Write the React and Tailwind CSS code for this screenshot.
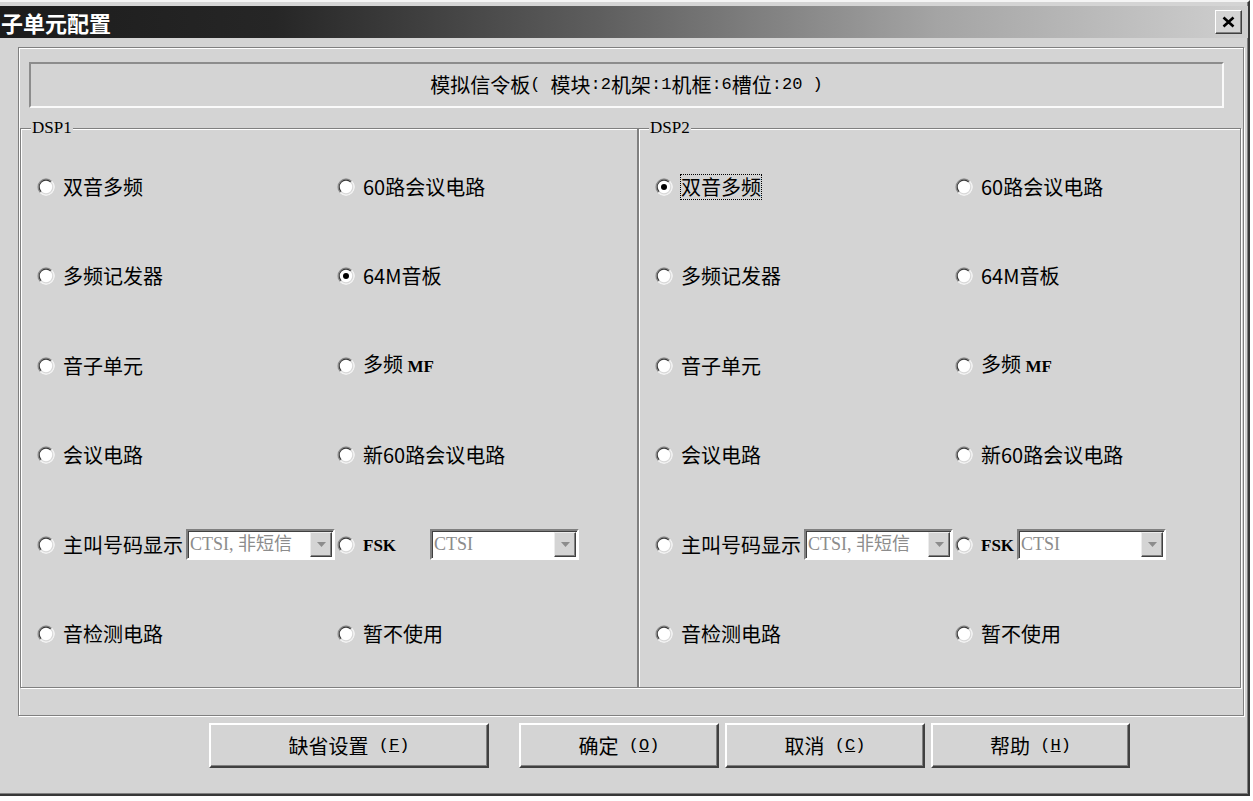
import React from 'react';

const cjk = "font-['Noto_Sans_CJK_SC',sans-serif]";
const serif = "font-['Liberation_Serif','Noto_Sans_CJK_SC',serif]";
const mono = "font-['Liberation_Mono','Noto_Sans_CJK_SC',monospace]";

function Radio({ checked }) {
  return (
    <svg width="18" height="18" viewBox="0 0 18 18" className="shrink-0">
      <circle cx="9" cy="9" r="8.5" fill="#fff" />
      <path d="M3.34 14.66A8 8 0 0 1 14.66 3.34" fill="none" stroke="#8c8c8c" strokeWidth="1.3" />
      <path d="M4.19 13.81A6.8 6.8 0 0 1 13.81 4.19" fill="none" stroke="#3c3c3c" strokeWidth="1.2" />
      <path d="M14.66 3.34A8 8 0 0 1 3.34 14.66" fill="none" stroke="#f2f2f2" strokeWidth="1.3" />
      <path d="M13.81 4.19A6.8 6.8 0 0 1 4.19 13.81" fill="none" stroke="#d8d8d8" strokeWidth="1.2" />
      {checked && <circle cx="9" cy="9" r="3" fill="#000" />}
    </svg>
  );
}

function Option({ checked, focus, children }) {
  return (
    <div className="flex items-center">
      <Radio checked={checked} />
      <span
        className={`ml-[8px] whitespace-nowrap text-[20px] leading-[24px] ${
          focus ? 'outline-1 outline-dotted outline-black' : ''
        }`}
      >
        {children}
      </span>
    </div>
  );
}

function Combo({ text, className }) {
  return (
    <div
      className={`flex h-[31px] w-[149px] border-2 border-t-[#808080] border-l-[#808080] border-b-white border-r-white bg-white shadow-[inset_1px_1px_0_#404040] ${className}`}
    >
      <div className={`flex-1 overflow-hidden whitespace-nowrap pl-[2px] pt-[1px] text-[18px] leading-[25px] text-[#8c8c8c] ${serif}`}>
        {text}
      </div>
      <div className="m-[1px] flex w-[22px] items-center justify-center border border-t-[#ececec] border-l-[#ececec] border-b-[#404040] border-r-[#404040] bg-[#d4d4d4] shadow-[inset_-1px_-1px_0_#808080]">
        <svg width="9" height="5" viewBox="0 0 9 5">
          <path d="M0 0h9L4.5 5z" fill="#8c8c8c" />
        </svg>
      </div>
    </div>
  );
}

// one DSP group box
function Group({ label, width, firstChecked, fskGap }) {
  const rows = [
    [
      { text: '双音多频', checked: firstChecked, focus: firstChecked },
      { text: '60路会议电路' },
    ],
    [{ text: '多频记发器' }, { text: '64M音板', checked: !firstChecked }],
    [
      { text: '音子单元' },
      {
        text: (
          <>
            多频 <span className={`text-[17px] font-bold ${serif}`}>MF</span>
          </>
        ),
      },
    ],
    [{ text: '会议电路' }, { text: '新60路会议电路' }],
  ];

  return (
    <div
      className={`relative h-[560px] ${width} border border-[#808080] pt-[13px] pl-[16px] shadow-[inset_1px_1px_0_#fff,1px_1px_0_#fff]`}
    >
      <span className={`absolute -top-[11px] left-[10px] bg-[#d4d4d4] px-[1px] text-[17px] leading-[20px] ${serif}`}>
        {label}
      </span>

      {rows.map((row, i) => (
        <div key={i} className="flex h-[89.5px] items-center">
          <div className="flex w-[300px] items-center">
            <Option checked={row[0].checked} focus={row[0].focus}>{row[0].text}</Option>
          </div>
          <Option checked={row[1].checked}>{row[1].text}</Option>
        </div>
      ))}

      {/* caller-id / FSK row */}
      <div className="flex h-[89.5px] items-center">
        <div className="flex w-[300px] items-center">
          <Option>主叫号码显示</Option>
          <Combo text="CTSI, 非短信" className="ml-[3px]" />
        </div>
        <Option>
          <span className={`text-[17px] font-bold ${serif}`}>FSK</span>
        </Option>
        <Combo text="CTSI" className={fskGap} />
      </div>

      <div className="flex h-[89.5px] items-center">
        <div className="flex w-[300px] items-center">
          <Option>音检测电路</Option>
        </div>
        <Option>暂不使用</Option>
      </div>
    </div>
  );
}

function Btn({ label, hotkey, className }) {
  return (
    <button
      className={`flex h-[45px] items-center justify-center border-2 border-t-white border-l-white border-b-[#404040] border-r-[#404040] bg-[#d4d4d4] text-[20px] text-black shadow-[inset_-1px_-1px_0_#808080] ${className}`}
    >
      {label}
      <span className={`whitespace-pre text-[17px] ${mono}`}>
        {' ('}
        <span className="underline">{hotkey}</span>)
      </span>
    </button>
  );
}

export default function App() {
  const m = `text-[17px] ${mono}`;
  return (
    <div className={`h-[801px] w-[1253px] overflow-hidden bg-white text-black ${cjk}`}>
      <div className="flex h-[796px] w-[1250px] flex-col border-t-2 border-r-2 border-b-2 border-t-[#f4f4f4] border-r-[#383838] border-b-[#383838] bg-[#d4d4d4] pt-[4px] shadow-[inset_-1px_-1px_0_#808080]">
        {/* title bar */}
        <div className="flex h-[32px] items-center justify-between bg-[linear-gradient(to_right,#1c1c1c_0%,#262626_22%,#5e5e5e_48%,#a4a4a4_75%,#cfcfcf_100%)] pr-[6px]">
          <span className="pl-[1px] text-[22px] font-bold leading-none text-white">子单元配置</span>
          <div className="flex h-[24px] w-[27px] items-center justify-center border border-t-white border-l-white border-b-[#404040] border-r-[#404040] bg-[#d4d4d4] shadow-[inset_-1px_-1px_0_#808080]">
            <svg width="13" height="12" viewBox="0 0 13 12">
              <path d="M1.5 1.5l10 9M11.5 1.5l-10 9" stroke="#000" strokeWidth="2.6" />
            </svg>
          </div>
        </div>

        {/* body */}
        <div className="flex-1 pl-[18px] pr-[4px] pt-[9px]">
          <div className="flex h-[669px] flex-col border border-[#808080] shadow-[inset_1px_1px_0_#fff,1px_1px_0_#fff]">
            <div className="ml-[10px] mr-[19px] mt-[14px] flex h-[46px] items-center justify-center whitespace-pre border-2 border-t-[#8c8c8c] border-l-[#8c8c8c] border-b-[#fafafa] border-r-[#fafafa] text-[20px]">
              模拟信令板<span className={m}>( </span>模块<span className={m}>:2</span>机架<span className={m}>:1</span>机框
              <span className={m}>:6</span>槽位<span className={m}>:20 )</span>
            </div>
            <div className="ml-[1px] mt-[20px] flex">
              <Group label="DSP1" width="w-[618px]" firstChecked={false} fskGap="ml-[34px]" />
              <Group label="DSP2" width="w-[603px]" firstChecked fskGap="ml-[3px]" />
            </div>
          </div>

          <div className="mt-[7px] flex">
            <Btn label="缺省设置" hotkey="F" className="ml-[191px] w-[280px]" />
            <Btn label="确定" hotkey="O" className="ml-[30px] w-[200px]" />
            <Btn label="取消" hotkey="C" className="ml-[6px] w-[200px]" />
            <Btn label="帮助" hotkey="H" className="ml-[6px] w-[199px]" />
          </div>
        </div>
      </div>
    </div>
  );
}
